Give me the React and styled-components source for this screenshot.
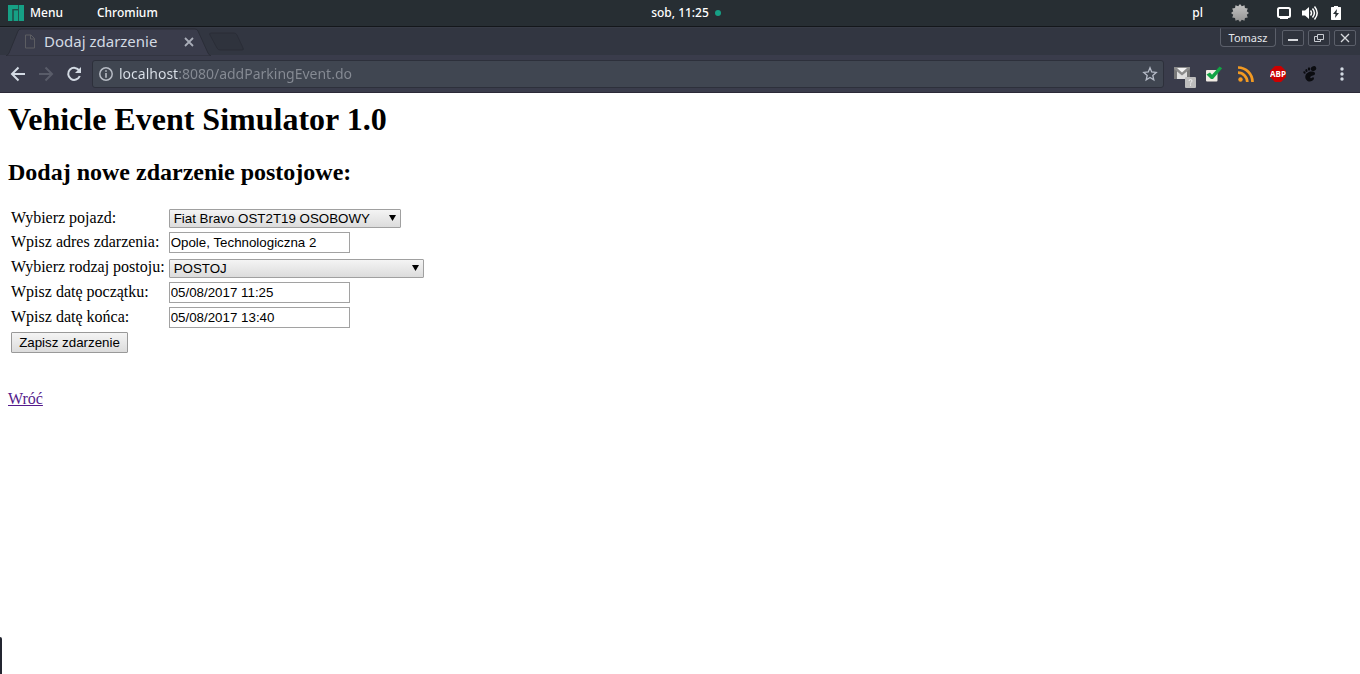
import React from 'react';
import styled, { createGlobalStyle } from 'styled-components';

const GlobalStyle = createGlobalStyle`
  *, *::before, *::after { box-sizing: border-box; }
  body { margin: 0; background: #fff; color: #000; }
  button, input, select { margin: 0; }
  svg { display: block; flex: none; }
`;

/* ---------- desktop panel ---------- */

const Panel = styled.header`
  display: grid;
  grid-template-columns: 1fr auto 1fr;
  align-items: center;
  height: 27px;
  padding: 0 8px;
  background: #272e33;
  border-bottom: 1px solid #14171b;
  color: #fff;
  font: 500 12px/26px 'Noto Sans', 'Open Sans', sans-serif;
`;

const PanelSide = styled.div`
  display: flex;
  align-items: center;
  justify-content: ${(p) => (p.$end ? 'flex-end' : 'flex-start')};
`;

const PanelButton = styled.button`
  display: flex;
  align-items: center;
  gap: 6px;
  height: 26px;
  margin-right: ${(p) => p.$gap || 0}px;
  padding: 0;
  border: 0;
  background: none;
  color: inherit;
  font: inherit;
`;

const Clock = styled(PanelButton)`
  padding-left: 12px;
`;

const Dot = styled.span`
  width: 6px;
  height: 6px;
  border-radius: 50%;
  background: #16a085;
`;

/* ---------- browser window ---------- */

const TabStrip = styled.div`
  display: flex;
  justify-content: space-between;
  height: 28px;
  padding: 0 4px 0 6px;
  background: #323641;
  border-top: 1px solid #373b46;
`;

const Tabs = styled.div`
  display: flex;
`;

const Tab = styled.div`
  position: relative;
  display: flex;
  align-items: center;
  width: 204px;
  height: 27px;
  padding: 0 15px 0 18px;
  color: #d3dae3;
  font: 15px/27px 'Noto Sans', sans-serif;
`;

const TabShape = styled.svg`
  position: absolute;
  inset: 0;
`;

const TabTitle = styled.span`
  position: relative;
  flex: 1;
  margin-left: 8px;
  white-space: nowrap;
`;

const IconButton = styled.button`
  position: relative;
  display: flex;
  align-items: center;
  justify-content: center;
  flex: none;
  width: ${(p) => p.$width || 28}px;
  height: ${(p) => p.$height || 28}px;
  padding: 0;
  border: 0;
  background: none;
`;

const WindowControls = styled.div`
  display: flex;
  align-items: flex-start;
  gap: 4px;
`;

const UserButton = styled.button`
  width: 56px;
  height: 19px;
  margin-right: 2px;
  padding: 0;
  border: 1px solid #5b5f6a;
  border-top-color: #363a45;
  border-radius: 0 0 4px 4px;
  background: #2f333d;
  color: #e4e6ea;
  font: 11px/18px 'Noto Sans', sans-serif;
`;

const WindowButton = styled.button`
  display: flex;
  align-items: center;
  justify-content: center;
  width: 22px;
  height: 16px;
  margin-top: 2px;
  padding: 0;
  border: 1px solid #5b5f6a;
  border-radius: 2px;
  background: #2f333d;
`;

const Toolbar = styled.nav`
  display: flex;
  align-items: center;
  height: 38px;
  padding: 0 4px;
  background: #3a3c4b;
  border-top: 1px solid #3a3c4b;
  border-bottom: 1px solid #2b2938;
`;

const AddressBar = styled.label`
  display: flex;
  align-items: center;
  flex: 1;
  height: 28px;
  margin: 0 4px;
  padding: 0 0 0 6px;
  border: 1px solid #2d303b;
  border-radius: 3px;
  background: #404651;
`;

const AddressInput = styled.input`
  flex: 1;
  min-width: 0;
  height: 26px;
  margin-left: 6px;
  padding: 0;
  border: 0;
  outline: 0;
  background: linear-gradient(90deg, #dce2ea 60px, #868b94 60px);
  background-clip: text;
  -webkit-background-clip: text;
  color: transparent;
  font: 14px/26px 'Noto Sans', sans-serif;
`;

const Extensions = styled.div`
  display: flex;
  gap: 4px;
`;

/* ---------- page ---------- */

const Page = styled.main`
  padding: 8px;
  font: 16px/18px 'Liberation Serif', 'Times New Roman', serif;
`;

const Title = styled.h1`
  margin: 0 0 21px;
  font-size: 32px;
  line-height: 37px;
`;

const Subtitle = styled.h2`
  margin: 0 0 20px;
  font-size: 24px;
  line-height: 27px;
`;

const FormTable = styled.table`
  border-spacing: 2px;
`;

const Row = styled.tr`
  height: ${(p) => p.$height || 23}px;
`;

const LabelCell = styled.td`
  padding: 0 1px 2px;
  vertical-align: middle;
`;

const FieldCell = styled.td`
  padding: 1px;
  vertical-align: bottom;
`;

const TextField = styled.input`
  display: block;
  width: 181px;
  height: 21px;
  padding: 0 1px;
  border: 1px solid #a2a2a2;
  border-radius: 0;
  background: #fff;
  color: #000;
  font-family: 'Liberation Sans', Arial, sans-serif;
`;

const SelectWrap = styled.div`
  position: relative;
  width: ${(p) => p.$width}px;
`;

const SelectBox = styled.select`
  display: block;
  width: 100%;
  height: 19px;
  padding: 0 20px 0 4px;
  appearance: none;
  border: 1px solid #a0a0a0;
  border-radius: 1px;
  background: linear-gradient(#f4f4f4, #dcdcdc);
  color: #000;
  font-family: 'Liberation Sans', Arial, sans-serif;
`;

const SelectArrow = styled.svg`
  position: absolute;
  top: 6px;
  right: 5px;
  pointer-events: none;
`;

const SubmitButton = styled.button`
  display: block;
  width: 117px;
  height: 21px;
  padding: 0;
  border: 1px solid #999;
  border-radius: 1px;
  background: linear-gradient(#f4f4f4, #dcdcdc);
  color: #000;
  font-family: 'Liberation Sans', Arial, sans-serif;
`;

const BackLink = styled.a`
  display: inline-block;
  margin-top: 34px;
  color: #551a8b;
`;

const EdgeBar = styled.div`
  position: fixed;
  left: 0;
  bottom: 0;
  width: 2px;
  height: 37px;
  border-top-right-radius: 2px;
  background: #232530;
`;

/* ---------- icons ---------- */

const ManjaroIcon = () => (
  <svg width="16" height="16" viewBox="0 0 16 16" fill="#16a085">
    <path d="M0 0h10v4H4.500v12H0z" />
    <path d="M5.500 5.200h4.500V16H5.500z" />
    <path d="M11 0h5v16h-5z" />
    <path d="M5 16V4.700h5M10.500 0v16" fill="none" stroke="#1f564f" />
  </svg>
);

const BadgeIcon = () => {
  const points = Array.from({ length: 24 }, (_, i) => {
    const r = i % 2 ? 7 : 9;
    const a = (i * Math.PI) / 12;
    return `${(9 + r * Math.sin(a)).toFixed(2)},${(9 - r * Math.cos(a)).toFixed(2)}`;
  }).join(' ');
  return (
    <svg width="18" height="18" viewBox="0 0 18 18">
      <defs>
        <linearGradient id="badge" x2="0" y2="1">
          <stop stopColor="#c4c4c4" />
          <stop offset="1" stopColor="#929292" />
        </linearGradient>
      </defs>
      <polygon points={points} fill="url(#badge)" />
    </svg>
  );
};

const ScreenIcon = () => (
  <svg width="14" height="12" viewBox="0 0 14 12">
    <rect x="1" y="1" width="12" height="9" rx="1.500" fill="none" stroke="#fff" strokeWidth="2" />
    <path d="M3 10h8v2H3z" fill="#fff" />
  </svg>
);

const SpeakerIcon = () => (
  <svg width="16" height="14" viewBox="0 0 16 14">
    <path d="M0 4.500h3L7 1v12L3 9.500H0z" fill="#fff" />
    <path d="M8.500 4.500q2 2.500 0 5M10.500 2.500q3.800 4.500 0 9M12.500.5q5.400 6.500 0 13" fill="none" stroke="#fff" strokeWidth="1.500" />
  </svg>
);

const BatteryIcon = () => (
  <svg width="10" height="14" viewBox="0 0 10 14">
    <path d="M3 0h4v1h2.500l.5.500v12l-.5.500h-9L0 13.500v-12L.5 1H3z" fill="#fff" />
    <path d="M6 3 2 8h2.500L4 12l4-5H5.500z" fill="#272e33" />
  </svg>
);

const FileGlyph = styled.svg`
  position: relative;
`;

const FileIcon = () => (
  <FileGlyph width="12" height="15" viewBox="0 0 12 15">
    <path d="M1.500 1h5.500l3.500 3.500V14h-9zM6.500 1v4h4" fill="none" stroke="#5c5d62" />
  </FileGlyph>
);

const CloseIcon = ({ size, color, width }) => (
  <svg width={size} height={size} viewBox="0 0 10 10">
    <path d="M1 1l8 8M9 1 1 9" stroke={color} strokeWidth={width} />
  </svg>
);

const ArrowIcon = ({ color, forward }) => (
  <svg width="16" height="16" viewBox="0 0 16 16">
    <path
      d={forward ? 'M1 8h13M7.500 1.500 14 8l-6.500 6.500' : 'M15 8H2M8.500 1.500 2 8l6.500 6.500'}
      fill="none"
      stroke={color}
      strokeWidth="2"
    />
  </svg>
);

const ReloadIcon = () => (
  <svg width="16" height="16" viewBox="0 0 16 16">
    <path d="M13.300 4.700A6 6 0 1 0 13.800 10" fill="none" stroke="#d3dae3" strokeWidth="2" />
    <path d="M15 1v6H9z" fill="#d3dae3" />
  </svg>
);

const InfoIcon = () => (
  <svg width="14" height="14" viewBox="0 0 14 14">
    <circle cx="7" cy="7" r="6.200" fill="none" stroke="#b6bbc4" strokeWidth="1.500" />
    <path d="M6.200 3.200h1.600v1.600H6.200zM6.200 6h1.600v4.800H6.200z" fill="#b6bbc4" />
  </svg>
);

const StarIcon = () => (
  <svg width="16" height="16" viewBox="0 0 16 16">
    <path
      d="M8 1.800 9.700 6l4.500.4-3.400 3 1 4.400L8 11.400l-3.800 2.400 1-4.400-3.400-3L6.300 6z"
      fill="none"
      stroke="#b6bcc8"
      strokeWidth="1.300"
    />
  </svg>
);

const MailIcon = () => (
  <svg width="28" height="28" viewBox="0 0 28 28">
    <g transform="translate(5 6)">
      <path d="M1 1h16v12H1z" fill="#dedede" />
      <path d="M1 1h3v12H1zM14 1h3v12h-3z" fill="#777" />
      <path d="M1 1h16v2L9 9.500 1 3z" fill="#8b8b8b" />
      <path d="M4 2h10L9 6.500z" fill="#f4f4f4" />
      <rect x="12" y="11" width="11" height="11" rx="1" fill="#bdbdbd" />
      <path d="M16 15q0-1.500 1.500-1.500T19 15q0 .8-.8 1.200-.7.400-.7 1.300M17.500 18.500v1.200" fill="none" stroke="#f2f2f2" />
    </g>
  </svg>
);

const CheckIcon = () => (
  <svg width="18" height="16" viewBox="0 0 18 16">
    <rect x="1" y="4" width="11.500" height="11.500" rx="1" fill="#f1ece4" />
    <path d="M1.500 8.500 5 6.500l2 2.200L14.500.5l2.700 1.800L8 13H6z" fill="#12a344" />
  </svg>
);

const RssIcon = () => (
  <svg width="16" height="16" viewBox="0 0 16 16">
    <circle cx="2.500" cy="13.500" r="2.200" fill="#f39a21" />
    <path d="M0 6.700a9.300 9.300 0 0 1 9.300 9.300M0 1.500A14.500 14.500 0 0 1 14.500 16" fill="none" stroke="#f39a21" strokeWidth="2.700" />
  </svg>
);

const AbpIcon = () => (
  <svg width="16" height="16" viewBox="0 0 16 16">
    <path d="M5 0h6l5 5v6l-5 5H5l-5-5V5z" fill="#cc0000" />
    <text x="8" y="11" textAnchor="middle" fill="#fff" fontFamily="Open Sans, sans-serif" fontWeight="700" fontSize="8">
      ABP
    </text>
  </svg>
);

const FootIcon = () => (
  <svg width="14" height="16" viewBox="0 0 14 16" fill="#0b0c10">
    <ellipse cx="10.500" cy="2.600" rx="2.800" ry="2.300" transform="rotate(-25 10.500 2.600)" />
    <ellipse cx="6" cy="3" rx="1.200" ry="1.800" />
    <ellipse cx="3.400" cy="4.600" rx="1.100" ry="1.500" transform="rotate(-20 3.400 4.600)" />
    <ellipse cx="1.500" cy="6.500" rx="1" ry="1.300" transform="rotate(-30 1.500 6.500)" />
    <path d="M10.500 5.800C7 4.800 2.600 7 2.300 10.500 2 13.500 4.500 15.600 7 15.500c2.400-.1 4.200-1.700 4-3.400-.1-1.300-1.700-.9-2.400-.2-.8.700-1.700.1-1.200-.9.900-1.800 4.300-.8 4.600-3.200.1-1-.6-1.700-1.500-2z" />
  </svg>
);

const MoreIcon = () => (
  <svg width="4" height="14" viewBox="0 0 4 14" fill="#d3dae3">
    <circle cx="2" cy="2" r="1.700" />
    <circle cx="2" cy="7" r="1.700" />
    <circle cx="2" cy="12" r="1.700" />
  </svg>
);

/* ---------- form parts ---------- */

const Select = ({ id, width, options }) => (
  <SelectWrap $width={width}>
    <SelectBox id={id} name={id}>
      {options.map((o) => (
        <option key={o}>{o}</option>
      ))}
    </SelectBox>
    <SelectArrow width="7" height="6" viewBox="0 0 7 6">
      <path d="M0 0h7L3.500 6z" />
    </SelectArrow>
  </SelectWrap>
);

const fields = [
  { id: 'vehicle', label: 'Wybierz pojazd:', width: 232, options: ['Fiat Bravo OST2T19 OSOBOWY'], height: 21 },
  { id: 'address', label: 'Wpisz adres zdarzenia:', value: 'Opole, Technologiczna 2' },
  { id: 'kind', label: 'Wybierz rodzaj postoju:', width: 255, options: ['POSTOJ'] },
  { id: 'start', label: 'Wpisz datę początku:', value: '05/08/2017 11:25' },
  { id: 'end', label: 'Wpisz datę końca:', value: '05/08/2017 13:40' },
];

export default function App() {
  return (
    <>
      <GlobalStyle />
      <Panel>
        <PanelSide>
          <PanelButton $gap={34}>
            <ManjaroIcon />
            Menu
          </PanelButton>
          <PanelButton>Chromium</PanelButton>
        </PanelSide>
        <Clock>
          sob, 11:25
          <Dot />
        </Clock>
        <PanelSide $end>
          <PanelButton $gap={28}>pl</PanelButton>
          <PanelButton $gap={28} aria-label="Powiadomienia"><BadgeIcon /></PanelButton>
          <PanelButton $gap={11} aria-label="Ekran"><ScreenIcon /></PanelButton>
          <PanelButton $gap={13} aria-label="Dźwięk"><SpeakerIcon /></PanelButton>
          <PanelButton $gap={11} aria-label="Bateria"><BatteryIcon /></PanelButton>
        </PanelSide>
      </Panel>

      <TabStrip>
        <Tabs>
          <Tab>
            <TabShape width="206" height="28" viewBox="0 0 206 28">
              <path d="M0 28q2-1 3-3L12 3q1-2 3-2h174q2 0 3 2l10 22q1 2 3 3z" fill="#3a3c4b" stroke="#2a2d37" />
            </TabShape>
            <FileIcon />
            <TabTitle>Dodaj zdarzenie</TabTitle>
            <IconButton $width={12} $height={27} aria-label="Zamknij kartę">
              <CloseIcon size={10} color="#a9adb8" width={1.8} />
            </IconButton>
          </Tab>
          <IconButton $width={32} aria-label="Nowa karta">
            <svg width="36" height="20" viewBox="0 0 36 20">
              <path d="M3 1h23q2 0 3 2l6 13q1 2-1 2H12q-2 0-3-2L2 3q-1-2 1-2z" fill="#2f333d" stroke="#2a2d37" />
            </svg>
          </IconButton>
        </Tabs>
        <WindowControls>
          <UserButton>Tomasz</UserButton>
          <WindowButton aria-label="Minimalizuj">
            <svg width="10" height="10" viewBox="0 0 10 10">
              <path d="M0 6h10v2H0z" fill="#d8dade" />
            </svg>
          </WindowButton>
          <WindowButton aria-label="Przywróć">
            <svg width="10" height="8" viewBox="0 0 10 8" fill="none" stroke="#c9ccd2">
              <path d="M3.500.5h6v5h-6zM6.500 5.500v2h-6v-5h3" />
            </svg>
          </WindowButton>
          <WindowButton aria-label="Zamknij">
            <CloseIcon size={10} color="#d8dade" width={1.3} />
          </WindowButton>
        </WindowControls>
      </TabStrip>

      <Toolbar>
        <IconButton aria-label="Wstecz"><ArrowIcon color="#d3dae3" /></IconButton>
        <IconButton aria-label="Dalej"><ArrowIcon color="#595c69" forward /></IconButton>
        <IconButton aria-label="Odśwież"><ReloadIcon /></IconButton>
        <AddressBar>
          <InfoIcon />
          <AddressInput aria-label="Adres" defaultValue="localhost:8080/addParkingEvent.do" />
          <IconButton $width={26} $height={26} aria-label="Dodaj zakładkę"><StarIcon /></IconButton>
        </AddressBar>
        <Extensions>
          <IconButton aria-label="Poczta"><MailIcon /></IconButton>
          <IconButton aria-label="Sprawdzanie"><CheckIcon /></IconButton>
          <IconButton aria-label="Kanały RSS"><RssIcon /></IconButton>
          <IconButton aria-label="Adblock Plus"><AbpIcon /></IconButton>
          <IconButton aria-label="GNOME"><FootIcon /></IconButton>
          <IconButton aria-label="Więcej"><MoreIcon /></IconButton>
        </Extensions>
      </Toolbar>

      <Page>
        <Title>Vehicle Event Simulator 1.0</Title>
        <Subtitle>Dodaj nowe zdarzenie postojowe:</Subtitle>
        <form onSubmit={(e) => e.preventDefault()}>
          <FormTable>
            <tbody>
              {fields.map((f) => (
                <Row key={f.id} $height={f.height}>
                  <LabelCell>
                    <label htmlFor={f.id}>{f.label}</label>
                  </LabelCell>
                  <FieldCell>
                    {f.options ? (
                      <Select id={f.id} width={f.width} options={f.options} />
                    ) : (
                      <TextField id={f.id} name={f.id} type="text" defaultValue={f.value} />
                    )}
                  </FieldCell>
                </Row>
              ))}
              <Row>
                <FieldCell colSpan={2}>
                  <SubmitButton type="submit">Zapisz zdarzenie</SubmitButton>
                </FieldCell>
              </Row>
            </tbody>
          </FormTable>
        </form>
        <BackLink href="#">Wróć</BackLink>
      </Page>
      <EdgeBar />
    </>
  );
}
